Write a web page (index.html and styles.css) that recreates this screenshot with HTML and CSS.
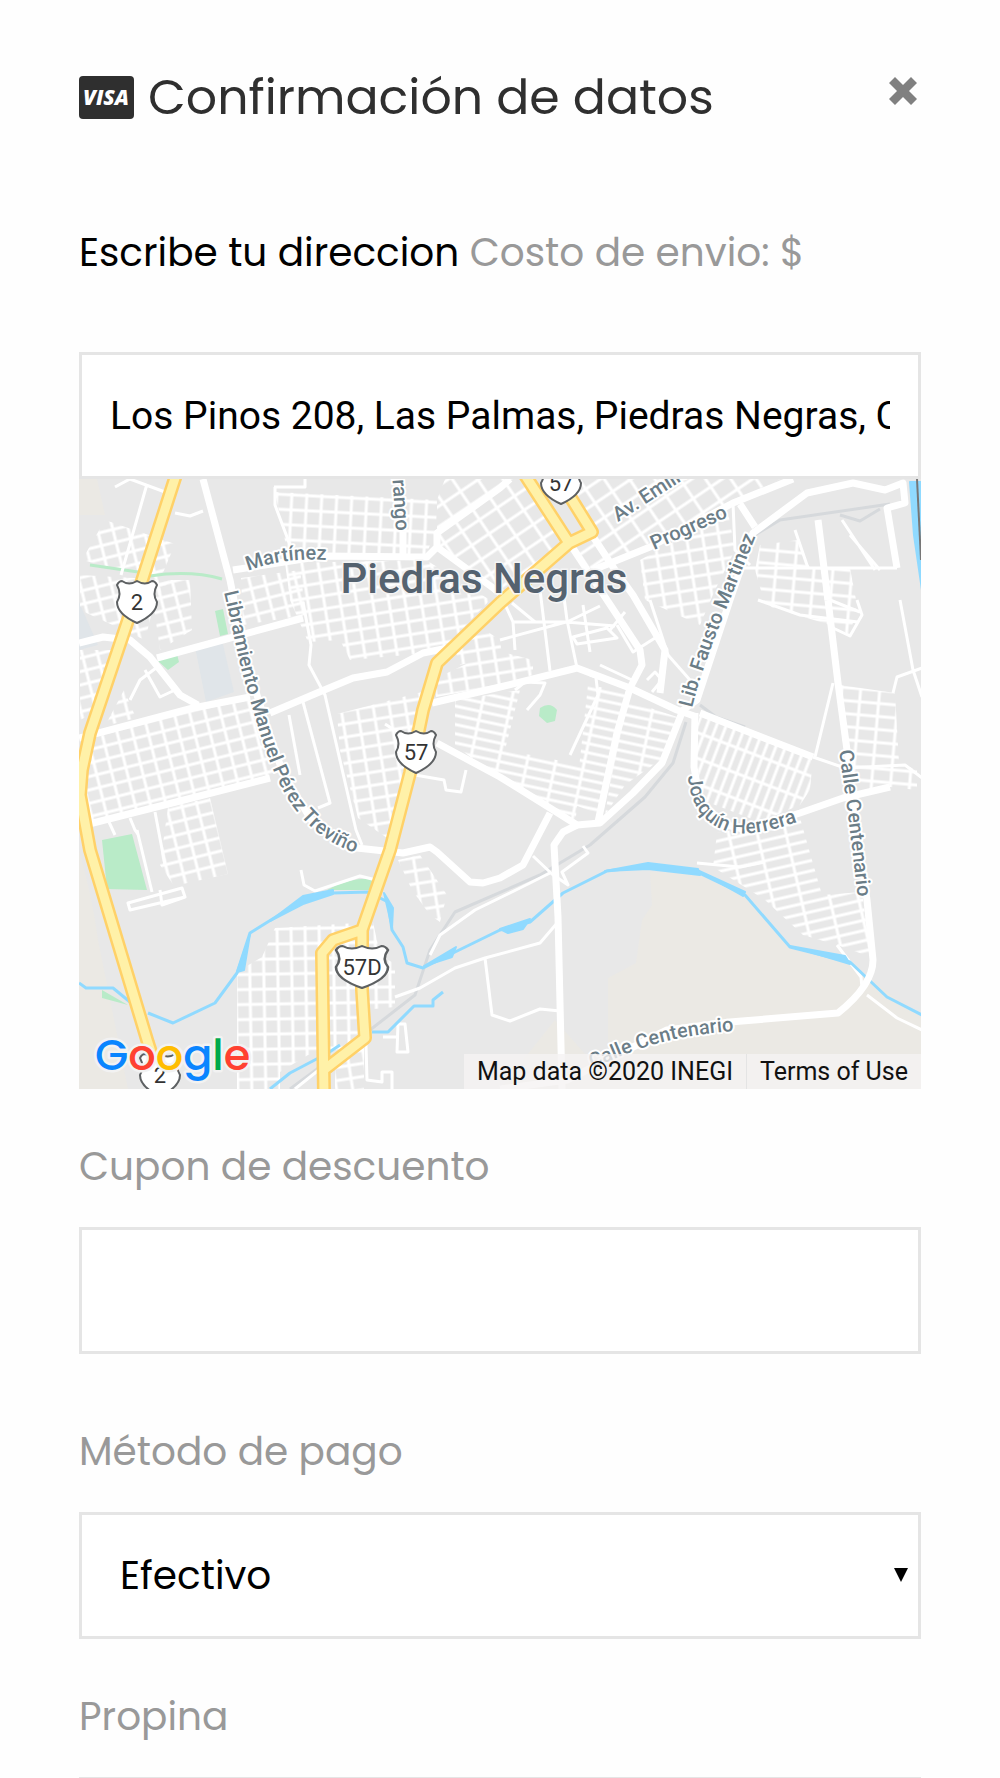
FILE: index.html
```html
<!DOCTYPE html>
<html lang="es">
  <head>
    <meta charset="UTF-8" />
    <meta name="viewport" content="width=device-width, initial-scale=1.0" />
    <title>Confirmación de datos</title>
    <link rel="stylesheet" href="styles.css">
  </head>
  <body>
    <div class="modal">
      <div class="modal-header">
        <h1>
          <svg class="visa" viewBox="0 0 55 43" aria-hidden="true">
            <rect width="55" height="43" rx="4" />
            <text x="27" y="29" text-anchor="middle">VISA</text>
          </svg>
          Confirmación de datos
        </h1>
        <button type="button" class="close" aria-label="Cerrar">
          <svg viewBox="0 0 28 28">
            <path d="M6 0L14 8L22 0L28 6L20 14L28 22L22 28L14 20L6 28L0 22L8 14L0 6Z" />
          </svg>
        </button>
      </div>

      <form>
        <label class="address-label" for="direccion">Escribe tu direccion <span>Costo de envio: $</span></label>
        <input class="field address" type="text" id="direccion" value="Los Pinos 208, Las Palmas, Piedras Negras, Coahuila" />

        <div class="map">
          <svg class="map-canvas" viewBox="79 479 842 610" preserveAspectRatio="xMidYMid slice">
            <defs>
              <pattern id="gridWest" width="15" height="13" patternUnits="userSpaceOnUse" patternTransform="translate(88 748) rotate(-14)"><path d="M0 2H15M2 0V13" /></pattern>
              <pattern id="gridNorth" width="15" height="15" patternUnits="userSpaceOnUse" patternTransform="translate(275 492) rotate(3)"><path d="M0 2H15M2 0V15" /></pattern>
              <pattern id="gridMid" width="16" height="13" patternUnits="userSpaceOnUse" patternTransform="rotate(-9)"><path d="M0 2H16M2 0V13" /></pattern>
              <pattern id="gridCenter" width="21" height="17" patternUnits="userSpaceOnUse" patternTransform="rotate(-34)"><path d="M0 2H21M2 0V17" /></pattern>
              <pattern id="gridSouth" width="14" height="15" patternUnits="userSpaceOnUse" patternTransform="translate(275 927) rotate(-1)"><path d="M0 2H14M2 0V15" /></pattern>
              <pattern id="gridEast" width="19" height="13" patternUnits="userSpaceOnUse" patternTransform="translate(840 685) rotate(5)"><path d="M0 2H19M2 0V13" /></pattern>
              <pattern id="gridHerrera" width="9" height="24" patternUnits="userSpaceOnUse" patternTransform="rotate(21)"><path d="M0 2H9M2 0V24" /></pattern>
              <pattern id="gridRows" width="28" height="9" patternUnits="userSpaceOnUse" patternTransform="rotate(12)"><path d="M0 2H28M2 0V9" /></pattern>
              <pattern id="gridTilt" width="28" height="10" patternUnits="userSpaceOnUse" patternTransform="translate(759 850) rotate(-13)"><path d="M0 2H28M2 0V10" /></pattern>
              <path id="shield" d="M-20 -17Q-18 -21 -15 -21Q-8 -16 0 -21Q8 -16 15 -21Q18 -21 20 -17Q15 -8 20 0Q20 12 0 21Q-20 12 -20 0Q-15 -8 -20 -17Z" />
              <g id="highways">
                <path d="M176 475L139 590L128 620L90 733L82 770L80 795L90 850L148 1043L165 1095" />
                <path d="M525 475L569 543L500 603L437 663L423 710L410 773L390 850L362 930L333 940L322 953L324 1095M362 930V990L365 1038L325 1069M566 490L592 532L569 543" />
              </g>
              <path id="roadMartinez" d="M248 571Q284 557 326 560" />
              <path id="roadLibramiento" d="M224 592C232 625 237 656 246 686S262 743 272 767S303 838 362 855" />
              <path id="roadFausto" d="M692 708C700 675 712 645 727 607L755 538" />
              <path id="roadHerrera" d="M688 776C690 805 705 828 735 833C760 835 780 828 812 817" />
              <path id="roadCentenario" d="M839 751Q848 810 858 900" />
              <path id="roadCentenarioSur" d="M592 1068C622 1057 652 1037 734 1031" />
            </defs>

            <rect class="land" x="79" y="479" width="842" height="610" />

            <!-- terrain -->
            <path class="sand" d="M79 479H97L105 515H79ZM79 850Q93 900 98 940L128 1089H79ZM650 872L697 874L745 897L790 949L850 964L922 1018V1089H500L555 1020L608 1080V978L636 963L642 920L652 905Z" />
            <path class="grey-area" d="M79 602L98 645L79 650ZM195 647L222 640L234 692L206 702Z" />
            <path class="rail" d="M700 705L716 717L745 727M755 535L780 520L890 504M840 515L860 521L880 509M686 722L673 763L645 797L590 845L540 875L455 912L430 950L415 995L370 1030L290 1089" />

            <!-- neighbourhood streets -->
            <path fill="url(#gridWest)" d="M90 739L193 708L250 697L268 725L283 773L85 825Z" />
            <path fill="url(#gridWest)" d="M105 520L175 544L160 580L82 560ZM80 575L170 580L155 600L145 640L80 610ZM80 650L120 650L100 710L80 720ZM124 690L136 718L105 726Z" />
            <path fill="url(#gridWest)" d="M168 807L210 798L228 874L174 886L160 865Z" />
            <path fill="url(#gridWest)" d="M150 580L190 580L192 630L160 650ZM241 578L300 570L306 615L243 625Z" />
            <path fill="url(#gridNorth)" d="M275 492L437 500L436 530L426 555H288Z" />
            <path fill="url(#gridMid)" d="M285 563L426 560L490 600L440 652L350 660L340 640L308 642L290 600Z" />
            <path fill="url(#gridMid)" d="M337 714L422 692L412 770L390 840L358 818L340 750ZM437 678L495 650L533 660V675L500 685L436 697ZM455 650L485 630L500 640L502 655L460 665Z" />
            <path fill="url(#gridCenter)" d="M437 500L445 479H525L565 540L500 598L437 547ZM545 479L780 479L735 500L640 548L592 570L570 540L592 532Z" />
            <path fill="url(#gridMid)" d="M640 560L728 512L735 550L715 590L700 625L645 600Z" />
            <path fill="url(#gridRows)" d="M455 700L520 690L505 750L582 765L575 825L500 780L455 745ZM588 685L628 692L616 735L600 815L575 805ZM627 700L680 718L660 760L625 785L605 815L618 735Z" />
            <path fill="url(#gridHerrera)" d="M700 715L813 757L810 790L800 805L760 822L702 800L694 740Z" />
            <path fill="url(#gridEast)" d="M760 545L798 540L810 568L850 568L857 605L850 635L830 625L765 605L755 570Z" />
            <path fill="url(#gridEast)" d="M840 685L895 693L899 763L917 770V790L890 787L845 795Z" />
            <path fill="url(#gridTilt)" d="M717 833L800 818L822 895L862 892L871 957L837 945L803 935L765 900L713 867Z" />
            <path fill="url(#gridSouth)" d="M237 972L262 957L275 928L373 922L380 955L395 964V1007L363 1010V1045L308 1055L280 1072V1089H237Z" />
            <path fill="url(#gridMid)" d="M398 860L420 855L447 895L440 922L430 915L412 890ZM335 1065L364 1045V1089H335Z" />

            <path class="park" d="M215 611L223 609L228 634L220 636ZM158 661L177 654L179 662L168 670ZM102 840L132 834L147 890L107 889ZM327 890Q350 876 380 879L372 890ZM102 990L128 1005L102 998ZM540 708Q550 701 557 710L555 721L547 723L539 716Z" />
            <path class="park-line" d="M90 565L138 572M150 576Q190 570 222 579" />

            <g class="street">
              <path d="M115 487L130 479L165 492M147 484L121 575M175 513L190 516L203 511M274 487H305V479M275 487V505L290 545" />
              <path d="M303 602L311 645L309 665L325 695L356 830L362 845M303 702L330 803L318 808M289 715L300 775M385 724L410 740M415 775L444 780L446 790L461 792L466 770" />
              <path d="M503 600L513 622L515 650M540 590L550 671M563 590L567 620L577 668M583 605L590 652M500 640L566 622L615 626M513 622H567L600 606M573 637L607 628L617 638L577 644Z" />
              <path d="M512 603L535 622M617 625L633 652L655 638M600 665L632 680M625 612L610 630M650 600L668 655L690 680" />
              <path d="M630 688L590 675M596 678L598 695L570 755M515 690L525 682L545 683L540 695L527 710M647 680L655 672L662 680M652 692L662 680" />
              <path d="M743 568L897 568M795 530L808 568M842 520L875 570M850 535L880 570M818 520L826 600M733 503L735 550L750 565" />
              <path d="M900 600L913 670L922 697M893 693L897 677L922 668M833 683L815 757M813 757L845 768L905 765L922 778M694 762L700 790" />
              <path d="M830 600L860 612M857 600L862 615L850 636L833 628M758 600L800 615L858 622" />
              <path d="M137 830L152 892M128 903L182 888L185 897L130 910ZM160 890L162 905L185 897M301 870L304 885L315 891L360 876L376 880" />
              <path d="M109 822L115 835M130 818L135 830L138 834M155 812L165 865M160 665L140 680L130 700M145 670L160 697L175 690" />
              <path d="M395 997L420 988L455 968L485 958L540 943L558 922M485 958L492 1015L510 1021L540 1009L560 1011M383 1037L397 1037M398 1024H405L408 1052H397Z" />
              <path d="M430 955L440 935L475 910L520 888L550 873M533 856L552 874L568 885L562 872L588 853L583 846M697 863L740 867L765 862M837 945L861 977L862 988M867 995L897 1018L922 1030" />
              <path d="M366 1045L367 1080L382 1082V1072H392V1089M295 1089L325 1065" />
            </g>

            <!-- river -->
            <path class="river" d="M79 983L86 988L113 988L130 1002M148 1013L173 1023L215 1003L237 973L250 933L303 900L333 893L368 892L388 902L392 930L403 947L407 963L423 968L453 953L500 930L530 922L563 893L607 871L648 866L697 872L745 895L790 947L850 962L887 997L922 1015" />
            <path class="river-wide" d="M237 972L250 934L244 970ZM270 921L303 896L333 890V894L303 904ZM384 893L393 908L392 928L388 910ZM424 966L456 947L452 957ZM500 929L530 919L523 929L508 933ZM605 871L648 863L698 869L700 875L648 869ZM697 870L745 892L743 896ZM790 946L845 956L850 964ZM910 482H922V590L914 535Z" />
            <path class="creek" d="M443 992L433 1000V1006H414L388 1032H372M340 1045L328 1053L290 1073L270 1089" />
            <path class="bridge" d="M917 479L921 560" />

            <!-- main roads -->
            <g class="road">
              <path d="M203 479L230 580L246 660L267 727L283 773L313 823L357 848L403 853L430 847L437 852L470 882L483 883L500 878L523 865L550 813" />
              <path d="M437 743L500 777L550 808L577 825L600 823L633 793L662 763L683 710L697 700L730 600L753 533L807 493L853 483L885 490L903 483L905 503L887 508L897 568" />
              <path d="M577 825L563 832L554 845L558 917L562 1089" />
              <path d="M432 703L500 687L577 668L630 688L677 710L697 717M630 688L617 733L598 822M572 547L607 600L640 650L642 665L630 688" />
              <path d="M593 570L650 547L733 503L793 479M740 504L755 527M592 535L615 570L633 595L665 650L660 693M695 713L694 767L700 803L727 825L747 830L800 813L843 798L890 787" />
              <path d="M828 600L838 683L847 750L860 850L867 900L873 960Q873 985 838 1013L730 1022L667 1030L627 1050L567 1080L500 1089" />
              <path d="M818 520L828 600M79 643L103 637L130 640L150 657L180 695L198 705M157 658L230 638L303 618M79 738L193 708L250 697M270 713L317 693L353 678L387 672L423 653L453 647M85 825L180 801L270 778" />
              <path d="M233 570L323 556L427 557L437 547V533L500 488L510 479M437 547L500 593M403 532V556M700 713L813 757" />
            </g>

            <!-- highways -->
            <use href="#highways" class="highway-casing" />
            <use href="#highways" class="highway-fill" />

            <g class="road-name">
              <text><textPath href="#roadMartinez">Martínez</textPath></text>
              <text><textPath href="#roadLibramiento">Libramiento Manuel Pérez Treviño</textPath></text>
              <text><textPath href="#roadFausto">Lib. Fausto Martinez</textPath></text>
              <text><textPath href="#roadHerrera">Joaquín Herrera</textPath></text>
              <text><textPath href="#roadCentenario">Calle Centenario</textPath></text>
              <text><textPath href="#roadCentenarioSur">Calle Centenario</textPath></text>
              <text transform="translate(618 522) rotate(-33)">Av. Emilio</text>
              <text transform="translate(654 550) rotate(-24)">Progreso</text>
              <text transform="translate(396 531) rotate(86)" text-anchor="end">Durango</text>
            </g>
            <text class="city-name" x="484" y="593" text-anchor="middle">Piedras Negras</text>

            <g class="shield">
              <use href="#shield" x="137" y="602" />
              <use href="#shield" x="416" y="752" />
              <use href="#shield" x="561" y="483" />
              <use href="#shield" x="160" y="1075" />
              <use href="#shield" transform="translate(362 967) scale(1.3 1)" />
              <text x="137" y="610">2</text>
              <text x="416" y="760">57</text>
              <text x="561" y="491">57</text>
              <text x="160" y="1083">2</text>
              <text x="362" y="975">57D</text>
            </g>

            <text class="google" x="95" y="1070"><tspan class="blue">G</tspan><tspan class="red">o</tspan><tspan class="yellow">o</tspan><tspan class="blue">g</tspan><tspan class="green">l</tspan><tspan class="red">e</tspan></text>
          </svg>
          <div class="map-credits">
            <span>Map data ©2020 INEGI</span>
            <a href="#terms">Terms of Use</a>
          </div>
        </div>

        <label for="cupon">Cupon de descuento</label>
        <input class="field" type="text" id="cupon" />

        <label class="payment-label" for="pago">Método de pago</label>
        <div class="select-box">
          <select class="field" id="pago">
            <option>Efectivo</option>
            <option>Tarjeta</option>
          </select>
        </div>

        <label for="propina">Propina</label>
        <input class="field" type="text" id="propina" />
      </form>
    </div>
  </body>
</html>
```
FILE: styles.css
```css
* {
  box-sizing: border-box;
}
body {
  margin: 0;
  background: #fefefe;
  font-family: Poppins, Inter, sans-serif;
  font-size: 39px;
  color: #000;
}
.modal {
  height: 100vh;
  padding: 62px 79px 0;
  overflow: hidden;
}
.modal-header {
  display: flex;
  justify-content: space-between;
  align-items: flex-start;
  margin-bottom: 91px;
}
.modal-header h1 {
  display: flex;
  align-items: center;
  gap: 14px;
  margin: 0;
  font-size: 49px;
  font-weight: 400;
  line-height: 70px;
  color: #2f2f2f;
}
.visa {
  width: 55px;
  height: 43px;
}
.visa rect {
  fill: #2f2f2f;
}
.visa text {
  font: italic 800 21px "Open Sans", sans-serif;
  fill: #fff;
}
.close {
  width: 28px;
  height: 28px;
  margin: 15px 4px 0;
  padding: 0;
  border: none;
  background: none;
  cursor: pointer;
}
.close svg {
  display: block;
  fill: #808080;
}
label {
  display: block;
  margin: 48px 0 30px;
  line-height: 60px;
  color: #999;
}
.address-label {
  margin: 0 0 69px;
  color: #000;
}
.address-label span {
  color: #999;
}
.payment-label {
  margin-top: 68px;
}
.field {
  display: block;
  width: 100%;
  height: 127px;
  padding: 0 28px;
  border: 3px solid #e5e5e5;
  border-radius: 0;
  background: #fff;
  font: inherit;
  color: #000;
  outline: none;
}
.address {
  font-family: Roboto, sans-serif;
}
.select-box {
  position: relative;
}
.select-box select {
  padding: 0 38px;
  appearance: none;
}
.select-box::after {
  content: "";
  position: absolute;
  right: 13px;
  top: 56px;
  border: 7px solid transparent;
  border-top: 14px solid #000;
  border-bottom: none;
}

/* map */
.map {
  position: relative;
  height: 610px;
  overflow: hidden;
}
.map-canvas {
  display: block;
  width: 100%;
  height: 100%;
  font-family: Roboto, sans-serif;
}
.map-canvas path {
  stroke-linejoin: round;
}
pattern path {
  fill: none;
  stroke: #fff;
  stroke-width: 3;
}
.land {
  fill: #e8e8e8;
}
.sand {
  fill: #ebe9e4;
}
.grey-area {
  fill: #e0e5e9;
}
.park {
  fill: #b9ebc8;
}
.park-line {
  fill: none;
  stroke: #b9ebc8;
  stroke-width: 3;
}
.rail {
  fill: none;
  stroke: #d6d9dc;
  stroke-width: 3;
}
.street {
  fill: none;
  stroke: #fff;
  stroke-width: 3;
}
.road {
  fill: none;
  stroke: #fff;
  stroke-width: 7;
}
.river,
.creek {
  fill: none;
  stroke: #90daff;
  stroke-width: 3;
}
.river-wide {
  fill: #90daff;
  stroke: #90daff;
  stroke-width: 2;
}
.bridge {
  stroke: #777;
  stroke-width: 2;
}
.highway-casing {
  fill: none;
  stroke: #ffd168;
  stroke-width: 14;
}
.highway-fill {
  fill: none;
  stroke: #fff1a8;
  stroke-width: 9;
}
.road-name text {
  font-size: 20px;
  font-weight: 500;
  fill: #6b7d87;
  stroke: #fff;
  stroke-width: 4;
  stroke-linejoin: round;
  paint-order: stroke;
}
.city-name {
  font-size: 42px;
  font-weight: 500;
  fill: #55626f;
  stroke: #f4f4f4;
  stroke-width: 3;
  paint-order: stroke;
}
.shield use {
  fill: #fff;
  stroke: #5d6062;
  stroke-width: 2;
}
.shield text {
  font-size: 22px;
  fill: #333;
  text-anchor: middle;
}
.google {
  font: 500 43px Poppins, Lato, sans-serif;
  stroke: #f2f2f2;
  stroke-width: 5;
  stroke-linejoin: round;
  paint-order: stroke;
}
.blue {
  fill: #0a85ff;
}
.red {
  fill: #ff4131;
}
.yellow {
  fill: #ffbd00;
}
.green {
  fill: #00a94b;
}
.map-credits {
  display: flex;
  position: absolute;
  right: 0;
  bottom: 0;
  font: 25px/35px Roboto, sans-serif;
}
.map-credits span,
.map-credits a {
  padding: 0 13px;
  background: rgba(245, 243, 243, 0.8);
  color: #111;
  text-decoration: none;
}
.map-credits a {
  border-left: 1px solid #e4e4e4;
}
```
